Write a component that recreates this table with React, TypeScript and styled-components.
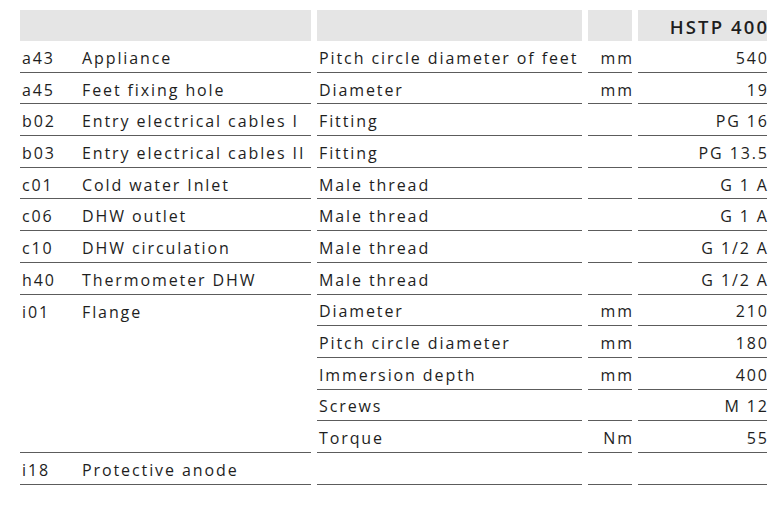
import React from 'react';
import styled, { createGlobalStyle } from 'styled-components';

// Spec table for the HSTP 400
const GlobalStyle = createGlobalStyle`
  body {
    margin: 0;
    background: #ffffff;
    font-family: 'Open Sans', 'Noto Sans', sans-serif;
    color: #1e1e1e;
  }
`;

const Page = styled.div`
  padding: 10px 0 0 20px;
  width: 784px;
  height: 506px;
  box-sizing: border-box;
`;

const Table = styled.div`
  display: grid;
  grid-template-columns: 291px 265px 44px 129px;
  grid-template-rows: 31px;
  grid-auto-rows: 31.7px;
  column-gap: 6px;
  width: 748px;
`;

const HeadCell = styled.div<{ $right?: boolean }>`
  background-color: #e5e5e5;
  display: flex;
  align-items: center;
  justify-content: ${(p) => (p.$right ? 'flex-end' : 'flex-start')};
  font-weight: 600;
  font-size: 18.5px;
  letter-spacing: 2.1px;
  padding-top: 1px;
`;

const Cell = styled.div<{ $right?: boolean; $span?: number }>`
  border-bottom: 1px solid #5c5c5c;
  display: flex;
  align-items: ${(p) => (p.$span ? 'flex-start' : 'center')};
  justify-content: ${(p) => (p.$right ? 'flex-end' : 'flex-start')};
  font-size: 16px;
  letter-spacing: 1.9px;
  padding: ${(p) => (p.$span ? '6px 0 0 2px' : '3px 0 0 2px')};
  box-sizing: border-box;
  white-space: nowrap;
  ${(p) => (p.$span ? `grid-row: span ${p.$span};` : '')}
`;

// trailing letter-spacing would push right-aligned text inward
const Trim = styled.span<{ $by: number }>`
  margin-right: -${(p) => p.$by}px;
`;

const Code = styled.span`
  width: 60px;
  flex: none;
`;

type Row = {
  code?: string;
  name?: string;
  span?: number;
  feature: string;
  unit: string;
  value: string;
};

const rows: Row[] = [
  { code: 'a43', name: 'Appliance', feature: 'Pitch circle diameter of feet', unit: 'mm', value: '540' },
  { code: 'a45', name: 'Feet fixing hole', feature: 'Diameter', unit: 'mm', value: '19' },
  { code: 'b02', name: 'Entry electrical cables I', feature: 'Fitting', unit: '', value: 'PG 16' },
  { code: 'b03', name: 'Entry electrical cables II', feature: 'Fitting', unit: '', value: 'PG 13.5' },
  { code: 'c01', name: 'Cold water Inlet', feature: 'Male thread', unit: '', value: 'G 1 A' },
  { code: 'c06', name: 'DHW outlet', feature: 'Male thread', unit: '', value: 'G 1 A' },
  { code: 'c10', name: 'DHW circulation', feature: 'Male thread', unit: '', value: 'G 1/2 A' },
  { code: 'h40', name: 'Thermometer DHW', feature: 'Male thread', unit: '', value: 'G 1/2 A' },
  { code: 'i01', name: 'Flange', span: 5, feature: 'Diameter', unit: 'mm', value: '210' },
  { feature: 'Pitch circle diameter', unit: 'mm', value: '180' },
  { feature: 'Immersion depth', unit: 'mm', value: '400' },
  { feature: 'Screws', unit: '', value: 'M 12' },
  { feature: 'Torque', unit: 'Nm', value: '55' },
  { code: 'i18', name: 'Protective anode', feature: '', unit: '', value: '' },
];

const App: React.FC = () => {
  return (
    <Page>
      <GlobalStyle />
      <Table>
        <HeadCell />
        <HeadCell />
        <HeadCell />
        <HeadCell $right>
          <Trim $by={2.1}>HSTP 400</Trim>
        </HeadCell>
        {rows.map((r, i) => (
          <React.Fragment key={i}>
            {r.code && (
              <Cell $span={r.span}>
                <Code>{r.code}</Code>
                {r.name}
              </Cell>
            )}
            <Cell>{r.feature}</Cell>
            <Cell $right>
              <Trim $by={1.9}>{r.unit}</Trim>
            </Cell>
            <Cell $right>
              <Trim $by={1.9}>{r.value}</Trim>
            </Cell>
          </React.Fragment>
        ))}
      </Table>
    </Page>
  );
};

export default App;
